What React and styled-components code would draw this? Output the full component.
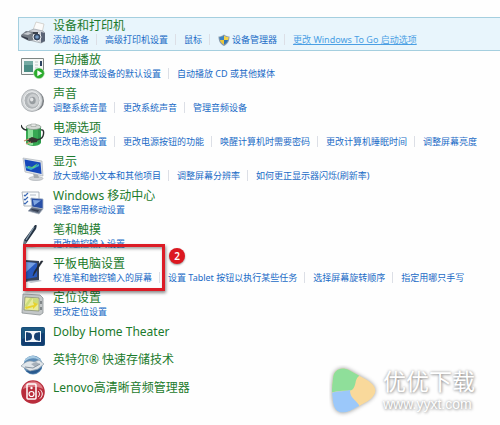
import React from 'react';
import styled, { createGlobalStyle, css } from 'styled-components';

const GlobalStyle = createGlobalStyle`
  body {
    margin: 0;
    background: #fefefe;
    font-family: 'Noto Sans', 'Noto Sans CJK SC', sans-serif;
  }
`;

const Page = styled.main`
  position: relative;
  padding: 17px 0 16px 18px;
`;

const List = styled.ul`
  margin: 0;
  padding: 0;
  list-style: none;
`;

const Row = styled.li`
  position: relative;
  display: flex;
  gap: 8px;
  box-sizing: border-box;
  min-height: ${({ $compact }) => ($compact ? '28px' : '34px')};
  padding-left: 2px;
  border: 1px solid transparent;
  border-right: 0;
  ${({ $active }) => $active && css`
    background: #e8f5fc;
    border-color: #a5cfdf;
  `}
`;

const IconBox = styled.div`
  flex: none;
  width: 24px;
  height: 24px;
  padding-top: ${({ $compact }) => ($compact ? '0' : '3px')};
  svg {
    display: block;
  }
`;

const Title = styled.a`
  display: block;
  width: fit-content;
  font-size: 12px;
  line-height: 15px;
  color: #1b7a2c;
  text-decoration: none;
  white-space: nowrap;
`;

const Links = styled.nav`
  display: flex;
  line-height: 13px;
  a + a {
    margin-left: 7px;
  }
  a + a::before {
    content: '';
    width: 1px;
    height: 11px;
    margin-right: 6px;
    background: #dcdfe6;
  }
`;

const TaskLink = styled.a`
  display: flex;
  align-items: center;
  gap: 2px;
  font-size: 9px;
  line-height: 13px;
  white-space: nowrap;
  color: ${({ $hover }) => ($hover ? '#4a9fe4' : '#1a6bc6')};
  text-decoration: ${({ $hover }) => ($hover ? 'underline' : 'none')};
`;

const Marker = styled.div`
  position: absolute;
  z-index: 1;
  top: -12px;
  left: 4px;
  box-sizing: border-box;
  width: 142px;
  height: 47px;
  border: 3px solid #dc1c26;
  box-shadow: 1px 2px 3px rgba(0, 0, 0, 0.45), inset 1px 2px 3px rgba(0, 0, 0, 0.35);
  pointer-events: none;
`;

const StepBadge = styled.span`
  position: absolute;
  z-index: 1;
  top: -8px;
  left: 150px;
  width: 16px;
  height: 16px;
  border-radius: 50%;
  background: #dc1820;
  box-shadow: 0 1px 2px rgba(0, 0, 0, 0.4);
  color: #fff;
  font-size: 10px;
  font-weight: 600;
  line-height: 16px;
  text-align: center;
`;

const Watermark = styled.aside`
  position: absolute;
  right: 25px;
  bottom: 6px;
  display: flex;
  align-items: center;
  gap: 4px;
  color: #fff;
  font-family: 'Liberation Sans', 'Noto Sans CJK SC', sans-serif;
  text-shadow: 0 0 3px rgba(0, 0, 0, 0.35), 1px 1px 3px rgba(0, 0, 0, 0.3);
`;

const SiteName = styled.div`
  font-size: 23px;
  line-height: 27px;
`;

const SiteUrl = styled.div`
  font-size: 14px;
  line-height: 17px;
`;

const Svg = ({ size = 24, children }) => (
  <svg width={size} height={size} viewBox="0 0 24 24" fill="none" aria-hidden="true">
    {children}
  </svg>
);

const PrinterIcon = () => (
  <Svg>
    <path d="M12 9 15 1l8 2-2 9z" fill="#fbfbfa" stroke="#c9c4be" strokeWidth=".7" />
    <path d="m8 10 5-2 9 2 2 2v8l-4 2-12-3z" fill="#cfd2d8" stroke="#9aa0a8" strokeWidth=".7" />
    <path d="m20 11 4 1v8l-4 2z" fill="#596375" />
    <path d="m0 14 5-4 8 1v8l-5 1-8-4z" fill="#747b84" />
    <path d="m2 13 5-2 4 1-4 2z" fill="#c8ccd1" />
    <path d="m1 15 6 2v2l-6-3z" fill="#343b48" />
    <circle cx="16" cy="16" r="4" fill="#34455e" stroke="#eef0f2" />
    <circle cx="16" cy="16" r="1.8" fill="#7499c4" />
    <path d="M12 11h5v2h-5z" fill="#3d434d" />
  </Svg>
);

const AutoplayIcon = () => (
  <Svg>
    <path d="M.5 3.5h22v16H.5z" fill="#f5f7f6" stroke="#7e8583" />
    <path d="M3 6h9v11H3z" fill="#4b8c83" />
    <path d="M3 6h9v4H3z" fill="#75aaa2" />
    <path d="M14 7h3M14 10h3M14 13h3" stroke="#bfc7c5" />
    <path d="M19 6h2v5h-2z" fill="#2d4360" />
    <circle cx="18" cy="18.3" r="5.4" fill="#2aab2c" stroke="#d3ebce" strokeWidth=".6" />
    <path d="m16.3 15.3 5 3-5 3z" fill="#fff" />
  </Svg>
);

const SoundIcon = () => (
  <Svg>
    <ellipse cx="14" cy="12" rx="9" ry="9.8" fill="#74787c" />
    <ellipse cx="11" cy="11.5" rx="10.5" ry="11" fill="#d3d6d8" stroke="#999ea2" strokeWidth=".7" />
    <ellipse cx="11" cy="11.5" rx="8" ry="8.8" fill="#b1b5b8" stroke="#eceeef" />
    <ellipse cx="12" cy="11.5" rx="5.8" ry="6.5" fill="#cbced0" />
    <ellipse cx="11.5" cy="11.5" rx="3.2" ry="3.8" fill="#979ca0" />
    <ellipse cx="10.7" cy="10.5" rx="1.7" ry="2" fill="#e2e4e5" />
  </Svg>
);

const PowerIcon = () => (
  <Svg>
    <path d="M5 4v16c2 4 13 4 15 0V4z" fill="#37a853" />
    <path d="M7 6v15c2 1 3 1 5 1V6z" fill="#8be099" />
    <path d="M17 5v16l3-2V5z" fill="#2d944a" />
    <ellipse cx="12.5" cy="4" rx="7.5" ry="2.5" fill="#d4d9d5" stroke="#7f8f83" strokeWidth=".7" />
    <path d="M10 1h5v2.5h-5z" fill="#e7e9e7" stroke="#8b928d" strokeWidth=".5" />
    <path d="M0 2c1 4 3 5 6 5M20 7c3-1 3 3 2 6s-5 4-9 4" stroke="#2a3030" strokeWidth="1.4" />
    <path d="m5 17 6-3 6 2-1 3-6 1z" fill="#35332f" />
    <path d="m3 18 5-2M5 21l5-2" stroke="#c58b65" strokeWidth="1.3" />
  </Svg>
);

const DisplayIcon = () => (
  <Svg>
    <ellipse cx="15" cy="21.5" rx="7" ry="2" fill="#d1d4d7" stroke="#a3a8ad" strokeWidth=".6" />
    <path d="m12 16 5 1 1 4h-5z" fill="#a7acb1" />
    <path d="m2 1 19 3 1 15L4 15z" fill="#dce0e5" stroke="#a2aab2" strokeWidth=".6" />
    <path d="m3.5 2.5 16 3 1 11.5L5 13.5z" fill="#1648ba" />
    <path d="m5 9 5 2 8-4v2l-8 4-5-2z" fill="#38a8c7" />
    <path d="m7 9 4 1 6-4-4 5-6-.5z" fill="#64cf78" />
  </Svg>
);

const MobilityIcon = () => (
  <Svg>
    <path d="M1 1h17v14H3z" fill="#fafcfd" stroke="#9da5ad" strokeWidth=".8" />
    <path d="m3 4 1 1 3-3M3 8l1 1 3-3M3 12l1 1 3-3" stroke="#3c69b5" strokeWidth="1.2" />
    <path d="M9 4h6M9 8h5" stroke="#b4bdc9" />
    <path d="m10 7 12 1v10l-11-2z" fill="#2950a7" stroke="#a8b5c7" strokeWidth=".8" />
    <path d="m12 9 8 .5-7 5z" fill="#82a8e2" />
    <path d="m11 16 11 2-4 5-11-3z" fill="#636f83" stroke="#aeb6c3" strokeWidth=".7" />
    <path d="m11 18 7 1-1 2-7-2z" fill="#343d50" />
  </Svg>
);

const PenIcon = () => (
  <Svg>
    <path d="m3 22 11-2 7 1-10 2z" fill="#dedede" />
    <path d="M14 0c2-1 2 1 1 4L6 17l-4 6 1-8z" fill="#253343" />
    <path d="M13 2 5 15" stroke="#8ba0b1" strokeWidth="1.2" />
    <path d="m3 15 3 2-4 6z" fill="#6c7b84" />
  </Svg>
);

const TabletIcon = () => (
  <Svg>
    <path d="m4 1 14 1v20L4 23z" fill="#374259" />
    <path d="m5 3 11 1v14L5 20z" fill="#2859be" />
    <path d="m5 3 10 1-10 9z" fill="#769fe2" />
    <path d="m5 22 14-1 2 1-11 2z" fill="#bfc5ce" />
    <path d="m22 2-8 12-2 3 1-4 7-11z" fill="#222933" stroke="#222933" strokeWidth=".5" />
  </Svg>
);

const LocationIcon = () => (
  <Svg>
    <path d="m2 1 17 1 3 3v15l-3 2-18-2z" fill="#c3c7c8" stroke="#8b9294" strokeWidth=".8" />
    <path d="m4 4 14 1v13L3 17z" fill="#e8eb9b" stroke="#7d8770" strokeWidth=".7" />
    <path d="m4 12 5-7 3 0-7 10zM12 5l5 1v5l-5-1z" fill="#cbdc7b" />
    <path d="m4 14 9-2-1-3 5 2-5 5 0-2-7 2z" fill="#e7d22d" />
    <path d="M20 8v3M20 14v3" stroke="#5f6668" strokeWidth="1.3" />
  </Svg>
);

const DolbyIcon = () => (
  <Svg>
    <rect x=".5" y="3.5" width="23" height="18" rx="1" fill="#123c70" stroke="#174d79" />
    <path d="M1 4h22v5L1 15z" fill="#23698a" opacity=".6" />
    <path d="M4 7h16v11H4z" fill="#f3f7fa" />
    <path d="M5 8.5h2a4 4 0 0 1 0 8H5zM19 8.5h-2a4 4 0 0 0 0 8h2z" fill="#153f70" />
    <path d="M5 8.5h2v8H5zM17 8.5h2v8h-2z" fill="#153f70" />
  </Svg>
);

const StorageIcon = () => (
  <Svg>
    <circle cx="12" cy="13" r="9.5" fill="#5b8ab5" />
    <path d="M3 10C6 2 18 2 21 11c-4-5-10-7-18-1z" fill="#a7cae2" />
    <path d="M5 19c5 4 12 4 16-4-3 3-7 4-12 3z" fill="#29598e" />
    <path d="M0 14c5-5 9-6 13-4l5-2 5 4-6 5-8 2z" fill="#e0e5e9" stroke="#8c9ba8" strokeWidth=".7" />
    <path d="m10 12 5-2 4 2-5 3z" fill="#a7b0b9" />
    <path d="m4 15 8 1 7-4" stroke="#8793a0" />
  </Svg>
);

const LenovoIcon = () => (
  <Svg>
    <circle cx="12" cy="12" r="11.8" fill="#b92d3c" />
    <path d="M2 9C4-1 20-1 22 9c-6-3-13-3-20 0z" fill="#df7d86" />
    <rect x="6" y="4" width="9" height="15" rx="1" stroke="#fff" strokeWidth="1.5" />
    <circle cx="10.5" cy="14" r="2.5" stroke="#fff" strokeWidth="1.2" />
    <circle cx="10.5" cy="8" r="1.2" fill="#fff" />
    <path d="M17 11c2 2 2 4 0 6M19 9.5c3 3 3 6 0 9" stroke="#fff" strokeWidth="1" />
  </Svg>
);

const ShieldIcon = () => (
  <Svg size={12}>
    <path d="M12 1c4 3 7 4 11 4 0 9-3 15-11 19C4 20 1 14 1 5c4 0 7-1 11-4z" fill="#8a9bac" />
    <path d="M12 3v9H4c-1-2-1-4-1-6 4 0 6-1 9-3z" fill="#3c83c4" />
    <path d="M12 3c3 2 5 3 9 3 0 2 0 4-1 6h-8z" fill="#f3d34b" />
    <path d="M4 12h8v9c-4-2-7-5-8-9z" fill="#edc73a" />
    <path d="M12 12h8c-1 4-4 7-8 9z" fill="#2e74b7" />
  </Svg>
);

const items = [
  {
    title: '设备和打印机',
    icon: PrinterIcon,
    active: true,
    links: [
      '添加设备',
      '高级打印机设置',
      '鼠标',
      { text: '设备管理器', shield: true },
      { text: '更改 Windows To Go 启动选项', hover: true },
    ],
  },
  { title: '自动播放', icon: AutoplayIcon, links: ['更改媒体或设备的默认设置', '自动播放 CD 或其他媒体'] },
  { title: '声音', icon: SoundIcon, links: ['调整系统音量', '更改系统声音', '管理音频设备'] },
  {
    title: '电源选项',
    icon: PowerIcon,
    links: ['更改电池设置', '更改电源按钮的功能', '唤醒计算机时需要密码', '更改计算机睡眠时间', '调整屏幕亮度'],
  },
  {
    title: '显示',
    icon: DisplayIcon,
    links: ['放大或缩小文本和其他项目', '调整屏幕分辨率', '如何更正显示器闪烁(刷新率)'],
  },
  { title: 'Windows 移动中心', icon: MobilityIcon, links: ['调整常用移动设置'] },
  { title: '笔和触摸', icon: PenIcon, links: ['更改触控输入设置'] },
  {
    title: '平板电脑设置',
    icon: TabletIcon,
    step: 2,
    links: ['校准笔和触控输入的屏幕', '设置 Tablet 按钮以执行某些任务', '选择屏幕旋转顺序', '指定用哪只手写'],
  },
  { title: '定位设置', icon: LocationIcon, links: ['更改定位设置'] },
  { title: 'Dolby Home Theater', icon: DolbyIcon },
  { title: '英特尔® 快速存储技术', icon: StorageIcon },
  { title: 'Lenovo高清晰音频管理器', icon: LenovoIcon },
];

const Item = ({ title, icon: Icon, links, active, step }) => (
  <Row $active={active} $compact={!links}>
    <IconBox $compact={!links}>
      <Icon />
    </IconBox>
    <div>
      <Title href="#">{title}</Title>
      {links && (
        <Links aria-label={title}>
          {links.map((link) => {
            const { text, shield, hover } = typeof link === 'string' ? { text: link } : link;
            return (
              <TaskLink key={text} href="#" $hover={hover}>
                {shield && <ShieldIcon />}
                <span>{text}</span>
              </TaskLink>
            );
          })}
        </Links>
      )}
    </div>
    {step && (
      <>
        <Marker />
        <StepBadge>{step}</StepBadge>
      </>
    )}
  </Row>
);

const SiteLogo = () => (
  <svg width="50" height="52" viewBox="0 0 50 52" aria-hidden="true">
    <defs>
      <clipPath id="siteLogo">
        <path d="M4 14C4 5 12 1 20 5l18 10c11 7 11 14 1 21L23 45C11 51 5 46 4 37Q2 25 4 14z" />
      </clipPath>
    </defs>
    <g filter="drop-shadow(0 0 2px rgba(0,0,0,.4))">
      <g clipPath="url(#siteLogo)">
        <path d="M0 0h50v52H0z" fill="#f9d99b" />
        <path d="M0 0h30v11c-5 4-2 9-7 14-6 2-14-1-23 4z" fill="#8fdf9a" />
        <path d="M0 29c9-4 14-2 21-4 0 8 5 9 9 15v12H0z" fill="#9bc8fa" />
      </g>
    </g>
  </svg>
);

const App = () => (
  <>
    <GlobalStyle />
    <Page>
      <List>
        {items.map((item) => (
          <Item key={item.title} {...item} />
        ))}
      </List>
      <Watermark>
        <SiteLogo />
        <div>
          <SiteName>优优下载</SiteName>
          <SiteUrl>www.yyxt.com</SiteUrl>
        </div>
      </Watermark>
    </Page>
  </>
);

export default App;
